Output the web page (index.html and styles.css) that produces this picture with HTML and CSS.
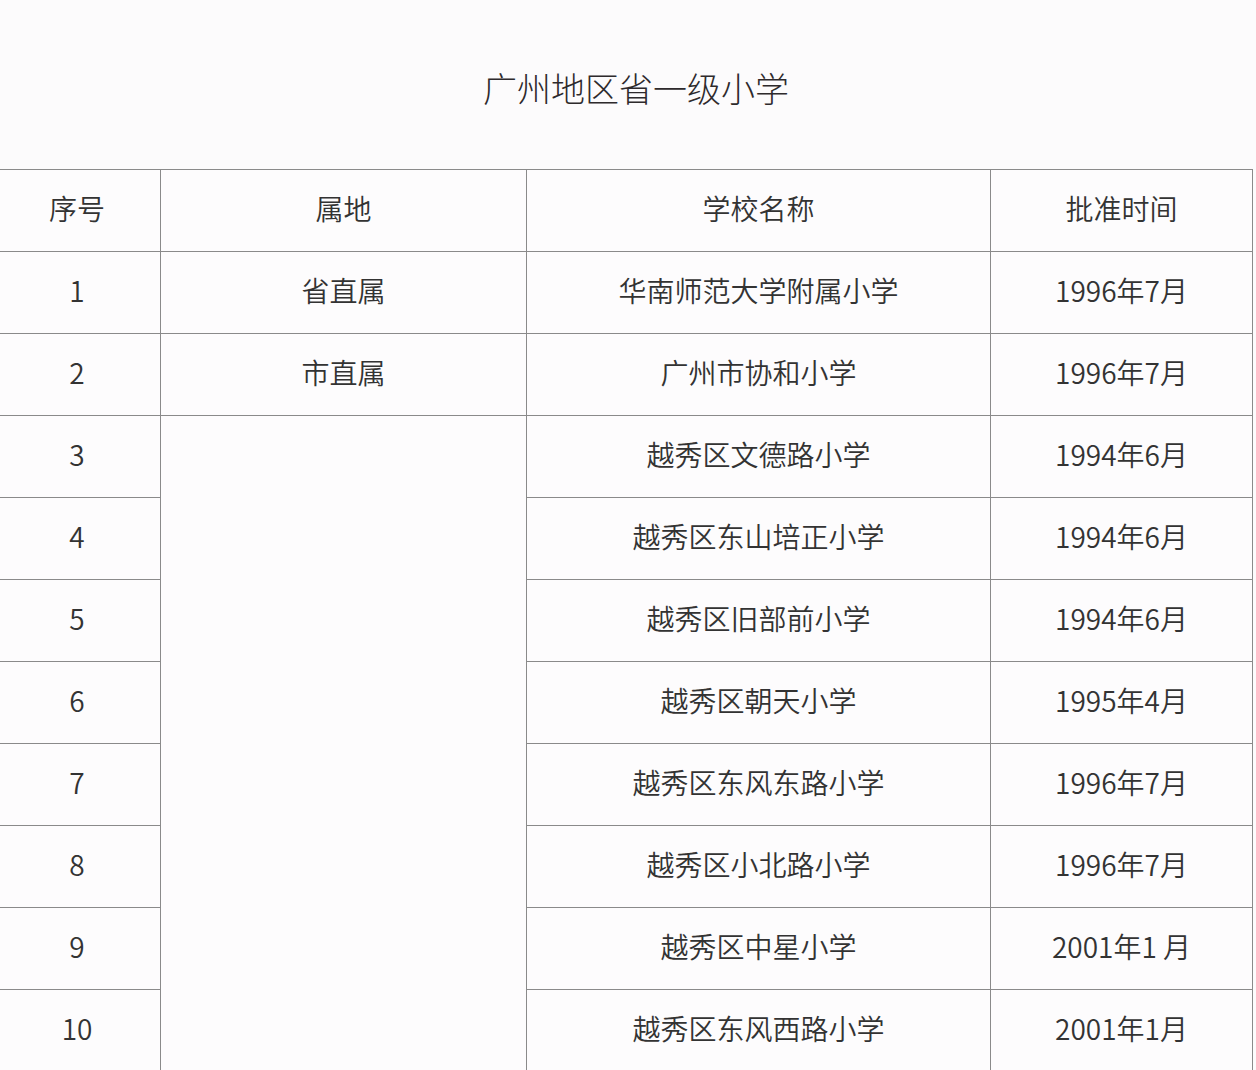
FILE: index.html
```html
<!DOCTYPE html>
<html lang="zh-CN">
<head>
<meta charset="utf-8">
<title>广州地区省一级小学</title>
<link rel="stylesheet" href="styles.css">
</head>
<body>
<div class="page">
  <div class="title-bar"><h1 class="title">广州地区省一级小学</h1></div>
  <div class="table">
    <div class="cell no">序号</div>
    <div class="cell">属地</div>
    <div class="cell">学校名称</div>
    <div class="cell">批准时间</div>

    <div class="cell no">1</div>
    <div class="cell">省直属</div>
    <div class="cell">华南师范大学附属小学</div>
    <div class="cell">1996年7月</div>

    <div class="cell no">2</div>
    <div class="cell">市直属</div>
    <div class="cell">广州市协和小学</div>
    <div class="cell">1996年7月</div>

    <div class="cell no">3</div>
    <div class="cell merged"></div>
    <div class="cell">越秀区文德路小学</div>
    <div class="cell">1994年6月</div>

    <div class="cell no">4</div>
    <div class="cell">越秀区东山培正小学</div>
    <div class="cell">1994年6月</div>

    <div class="cell no">5</div>
    <div class="cell">越秀区旧部前小学</div>
    <div class="cell">1994年6月</div>

    <div class="cell no">6</div>
    <div class="cell">越秀区朝天小学</div>
    <div class="cell">1995年4月</div>

    <div class="cell no">7</div>
    <div class="cell">越秀区东风东路小学</div>
    <div class="cell">1996年7月</div>

    <div class="cell no">8</div>
    <div class="cell">越秀区小北路小学</div>
    <div class="cell">1996年7月</div>

    <div class="cell no">9</div>
    <div class="cell">越秀区中星小学</div>
    <div class="cell">2001年1 月</div>

    <div class="cell no">10</div>
    <div class="cell">越秀区东风西路小学</div>
    <div class="cell">2001年1月</div>
  </div>
</div>
</body>
</html>
```
FILE: styles.css
```css
html, body {
  margin: 0;
  padding: 0;
  background: #fcfbfc;
}
body {
  font-family: "Noto Sans CJK SC", "Noto Sans", sans-serif;
  font-weight: 350;
  color: #333333;
}
.page {
  width: 1256px;
  height: 1070px;
  overflow: hidden;
}
.title-bar {
  height: 169px;
  display: flex;
  align-items: center;
  justify-content: center;
  padding-left: 16px;
  padding-top: 6px;
  box-sizing: border-box;
}
.title {
  margin: 0;
  font-size: 34px;
  font-weight: 300;
  color: #2e2a2c;
}
.table {
  width: 1253px;
  box-sizing: border-box;
  display: grid;
  grid-template-columns: 160px 365px 463px 261px;
  grid-auto-rows: 81px;
  gap: 1px;
  padding: 1px 1px 1px 0;
  background: #8a8a8a;
}
.cell {
  background: #fdfcfd;
  display: flex;
  align-items: center;
  justify-content: center;
  font-size: 28px;
  padding-bottom: 5px;
  box-sizing: border-box;
  color: #333333;
}
.cell.no {
  padding-right: 6px;
}
.cell.merged {
  grid-column: 2;
  grid-row: 4 / span 8;
}
```
